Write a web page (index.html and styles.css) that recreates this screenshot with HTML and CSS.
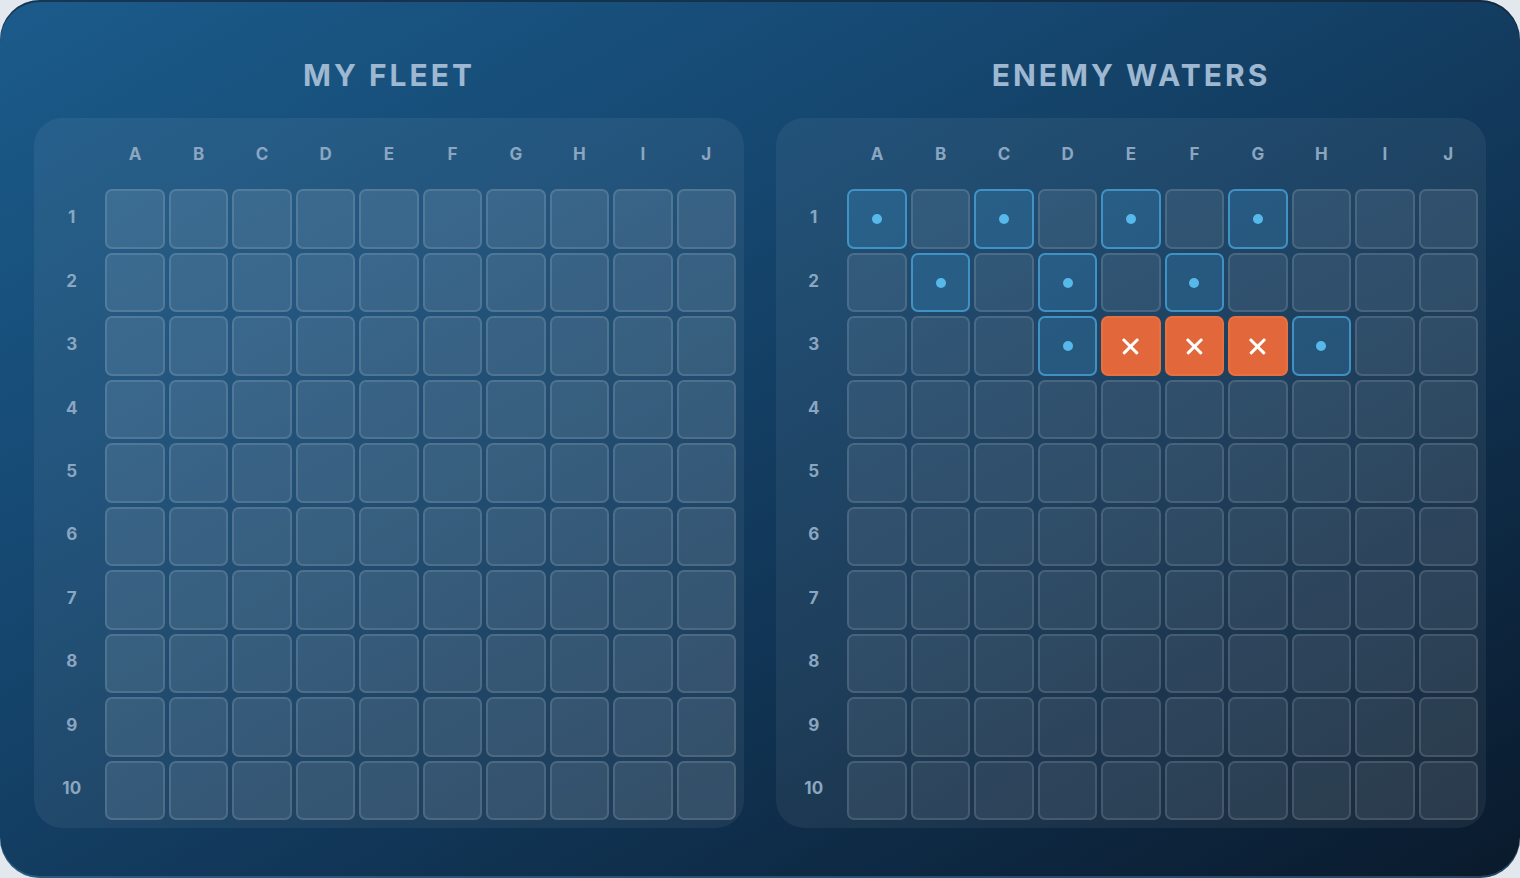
FILE: index.html
```html
<!DOCTYPE html>
<html lang="en">
  <head>
    <meta charset="UTF-8" />
    <meta name="viewport" content="width=device-width, initial-scale=1.0" />
    <title>Battleship</title>
    <link rel="stylesheet" href="styles.css">
  </head>
  <body>
    <div class="game">
      <section class="panel">
        <h2 class="panel-title">MY FLEET</h2>
        <div class="board" id="my-board"></div>
      </section>
      <section class="panel">
        <h2 class="panel-title">ENEMY WATERS</h2>
        <div class="board board--enemy" id="enemy-board"></div>
      </section>
    </div>

    <script>
      const cols = ["A", "B", "C", "D", "E", "F", "G", "H", "I", "J"];

      // shots fired at the enemy so far
      const shots = {
        A1: "miss", C1: "miss", E1: "miss", G1: "miss",
        B2: "miss", D2: "miss", F2: "miss",
        D3: "miss", E3: "hit", F3: "hit", G3: "hit", H3: "miss",
      };

      const buildBoard = (el, marks) => {
        const corner = document.createElement("div");
        corner.className = "label";
        el.appendChild(corner);

        cols.forEach((c) => {
          const head = document.createElement("div");
          head.className = "label";
          head.textContent = c;
          el.appendChild(head);
        });

        for (let row = 1; row <= 10; row++) {
          const label = document.createElement("div");
          label.className = "label";
          label.textContent = row;
          el.appendChild(label);

          cols.forEach((c) => {
            const cell = document.createElement("div");
            cell.className = "cell";
            const mark = marks[c + row];
            if (mark) cell.classList.add("cell--" + mark);
            el.appendChild(cell);
          });
        }
      };

      buildBoard(document.getElementById("my-board"), {});
      buildBoard(document.getElementById("enemy-board"), shots);
    </script>
  </body>
</html>
```

FILE: styles.css
```css
* {
  box-sizing: border-box;
}

body {
  margin: 0;
  background: #e3e8ee;
  font-family: Inter, "Liberation Sans", sans-serif;
}

/* main window */
.game {
  width: 1520px;
  height: 878px;
  padding: 55px 34px 0;
  display: flex;
  gap: 32px;
  border-radius: 40px;
  background: linear-gradient(150deg, #1b5b8b 0%, #164a74 30%, #113657 60%, #0a1a2c 100%);
  box-shadow: inset 0 2px 0 rgba(20, 30, 45, 0.6), inset 0 -2px 0 rgba(80, 150, 190, 0.35);
}

.panel {
  width: 710px;
  display: flex;
  flex-direction: column;
}

.panel-title {
  margin: 0 0 23px;
  line-height: 40px;
  font-size: 30px;
  font-weight: 700;
  letter-spacing: 3px;
  text-align: center;
  color: #9db8d0;
}

/* 11x11 grid: labels + 10x10 cells */
.board {
  padding: 8px;
  display: grid;
  grid-template-columns: repeat(11, 1fr);
  gap: 4px;
  border-radius: 28px;
  background: rgba(255, 255, 255, 0.06);
}

.label {
  aspect-ratio: 1;
  display: flex;
  align-items: center;
  justify-content: center;
  padding-bottom: 4px;
  font-size: 17px;
  font-weight: 700;
  color: #8ba6c0;
}

.cell {
  aspect-ratio: 1;
  display: flex;
  align-items: center;
  justify-content: center;
  border-radius: 7px;
  border: 2px solid rgba(255, 255, 255, 0.12);
  background: rgba(255, 255, 255, 0.1);
}

.board--enemy .cell {
  background: rgba(255, 255, 255, 0.08);
}

.board--enemy .cell--miss {
  background: rgba(70, 165, 225, 0.22);
  border-color: rgba(75, 170, 225, 0.7);
}

.cell--miss::after {
  content: "";
  width: 10px;
  height: 10px;
  border-radius: 50%;
  background: #56b9ea;
}

.board--enemy .cell--hit {
  position: relative;
  background: #e2673b;
  border-color: #e8703f;
}

/* the X on a hit */
.cell--hit::before,
.cell--hit::after {
  content: "";
  position: absolute;
  width: 21px;
  height: 2.5px;
  border-radius: 1px;
  background: #ffffff;
  transform: rotate(45deg);
}

.cell--hit::after {
  transform: rotate(-45deg);
}
```
